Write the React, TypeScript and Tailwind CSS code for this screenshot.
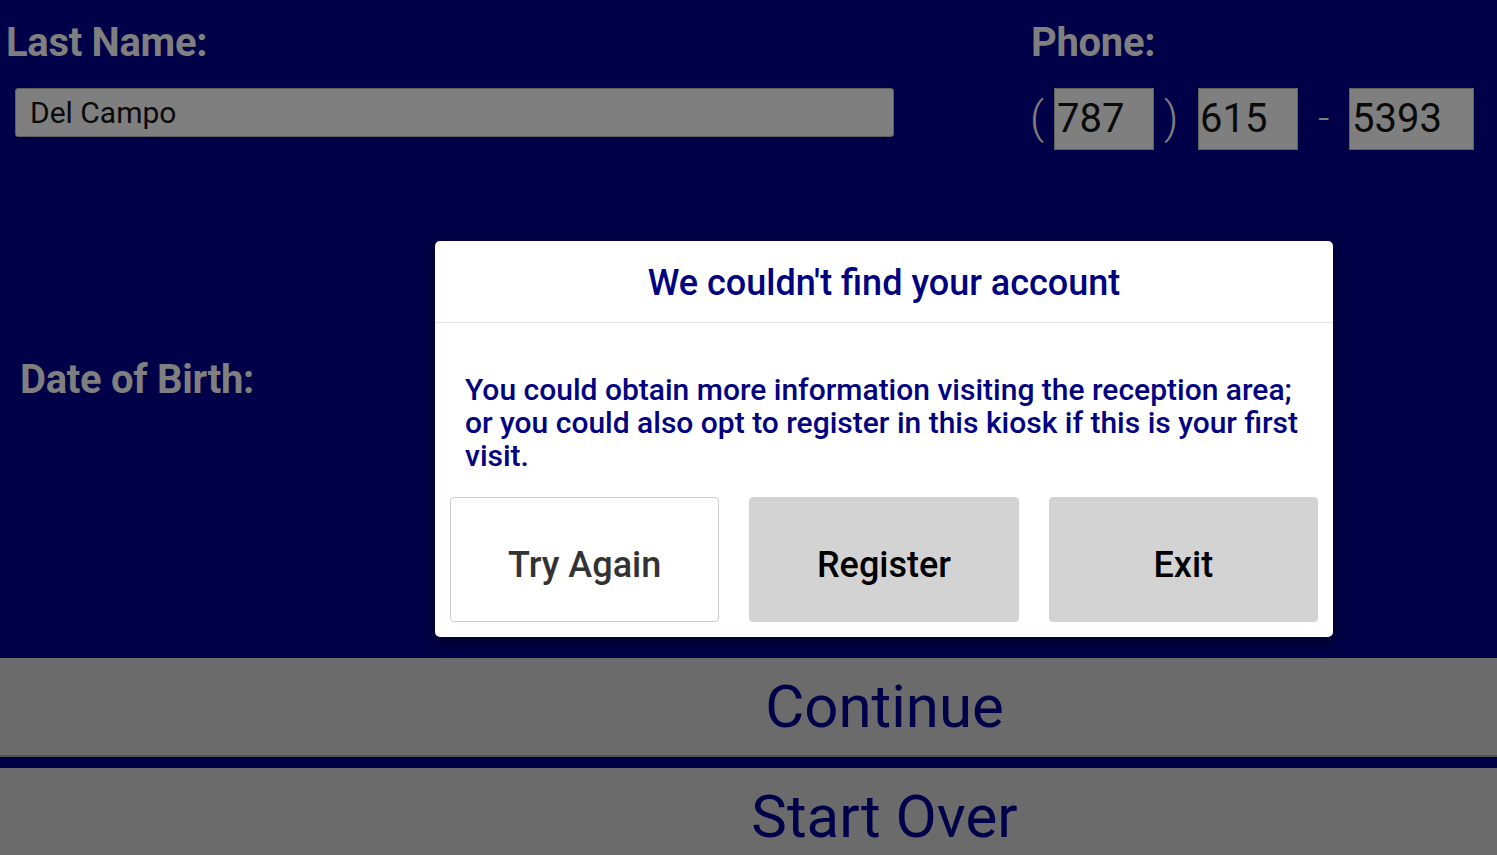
import React from "react";

const font = { fontFamily: "Roboto, 'Noto Sans', Arial, sans-serif" };

export default function App() {
  return (
    <div
      className="relative w-[1497px] h-[855px] overflow-hidden bg-[#000048] flex flex-col"
      style={font}
    >
      {/* form area */}
      <div className="flex h-[658px] shrink-0">
        <div className="w-[1025px] flex flex-col">
          <div className="pl-[6px] pt-[20px] text-[40px] font-bold leading-[46px] text-[#7f7f7f] tracking-[-0.3px]">
            Last Name:
          </div>
          <div className="ml-[15px] mt-[22px] w-[879px] h-[49px] bg-[#7f7f7f] border border-[#5f5f5f] rounded-[3px] flex items-center pl-[14px] text-[30px] text-[#0a0a0a]">
            Del Campo
          </div>
          <div className="pl-[20px] mt-[220px] text-[40px] font-bold leading-[46px] text-[#7f7f7f] tracking-[-0.3px]">
            Date of Birth:
          </div>
        </div>
        <div className="flex flex-col">
          <div className="pl-[6px] pt-[20px] text-[40px] font-bold leading-[46px] text-[#7f7f7f] tracking-[-0.3px]">
            Phone:
          </div>
          <div className="mt-[22px] flex items-start">
            <span className="text-[44px] leading-[61px] font-light text-[#7f7f7f] w-[29px] pl-[5px]">(</span>
            <div className="w-[100px] h-[62px] bg-[#7f7f7f] border border-[#5f5f5f] flex items-center pl-[2px] text-[40px] text-[#0a0a0a]">
              787
            </div>
            <span className="text-[44px] leading-[61px] font-light text-[#7f7f7f] w-[44px] pl-[10px]">)</span>
            <div className="w-[100px] h-[62px] bg-[#7f7f7f] border border-[#5f5f5f] flex items-center pl-[1px] text-[40px] text-[#0a0a0a]">
              615
            </div>
            <span className="text-[40px] leading-[61px] font-light text-[#7f7f7f] w-[51px] pl-[20px]">-</span>
            <div className="w-[125px] h-[62px] bg-[#7f7f7f] border border-[#5f5f5f] flex items-center pl-[2px] text-[40px] text-[#0a0a0a]">
              5393
            </div>
          </div>
        </div>
      </div>

      {/* bottom bars */}
      <div className="h-[99px] shrink-0 bg-[#6b6b6b] border-b-2 border-[#555555] flex items-start justify-center pl-[272px] pt-[14px] text-[60px] leading-[70px] text-[#00004a]">
        Continue
      </div>
      <div className="h-[11px] shrink-0" />
      <div className="flex-1 bg-[#6b6b6b] flex items-start justify-center pl-[272px] pt-[14px] text-[60px] leading-[70px] text-[#00004a]">
        Start Over
      </div>

      {/* modal */}
      <div className="absolute left-[435px] top-[241px] w-[898px] h-[396px] bg-white rounded-[5px] shadow-[0_5px_15px_rgba(0,0,0,0.55)] flex flex-col">
        <div className="h-[82px] pt-[2px] border-b border-[#e5e5e5] flex items-center justify-center text-[36px] font-medium text-[#000080]">
          We couldn't find your account
        </div>
        <div className="pl-[30px] pr-[20px] pt-[50px] text-[30px] font-medium leading-[33px] text-[#000080]">
          You could obtain more information visiting the reception area; or you could also opt to register in this kiosk if this is your first visit.
        </div>
        <div className="mt-auto px-[15px] pb-[15px] flex gap-[30px]">
          <button className="flex-1 h-[125px] pt-[11px] bg-white border border-[#cccccc] rounded-[4px] text-[36px] font-medium text-[#333333]">
            Try Again
          </button>
          <button className="flex-1 h-[125px] pt-[11px] bg-[#d3d3d3] border border-[#d3d3d3] rounded-[4px] text-[36px] font-medium text-black">
            Register
          </button>
          <button className="flex-1 h-[125px] pt-[11px] bg-[#d3d3d3] border border-[#d3d3d3] rounded-[4px] text-[36px] font-medium text-black">
            Exit
          </button>
        </div>
      </div>
    </div>
  );
}
